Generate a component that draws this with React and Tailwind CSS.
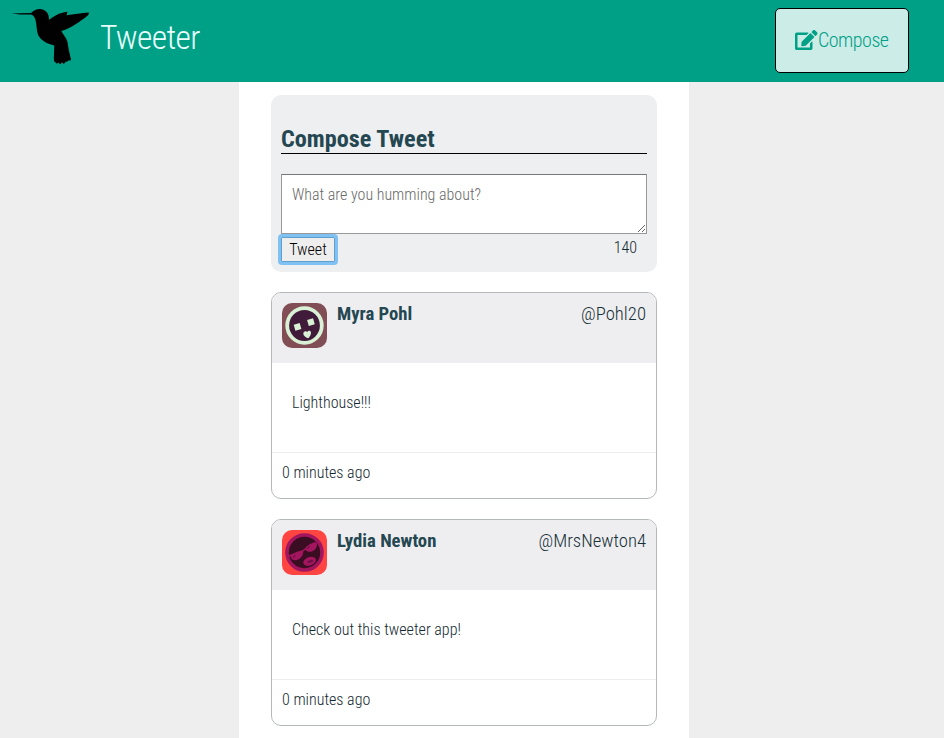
import { FaEdit } from "react-icons/fa";

function Bird() {
  return (
    <svg className="h-[82px] w-[100px] shrink-0" viewBox="0 0 100 82" fill="#000">
      <path d="M11.5 13.6 L20 13.2 L31 13 C33 10.8 36 9.1 40 9 C45 9.2 48.3 12.5 48.8 17 L49 19.8 C53 17 59 12.5 67.5 11.8 L66.5 15.2 C73 14.6 82 12.9 88.5 12.5 C90 14 87 16.3 84 18.5 C77 23.5 70 28.5 61.3 31 C63 34 66.5 38 67.5 42 C68 47 69.5 53 71 59.5 C70.5 61 69.5 60.5 68 60.5 C67.5 62 66.5 62 65.5 61.5 C65 64 63 64.5 62 62 C61.3 64.5 58.8 64.5 58.4 62.2 C57.5 64 55.5 63.8 55.5 62 C53.5 62.5 53.8 58 54 55 L54.3 45.5 C52 44.5 50 44.3 48 43.5 C42 40.8 38.5 37.5 37.3 32 C36.5 28 36.5 23.5 35.5 20 C34.8 17.5 33.5 15.2 31 14.6 L20 14.4 Z" />
    </svg>
  );
}

function MyraAvatar() {
  return (
    <svg className="size-[45px] shrink-0 rounded-[10px]" viewBox="0 0 45 45">
      <rect width="45" height="45" fill="#824e55" />
      <circle cx="22.5" cy="22.5" r="17.3" fill="#411b3a" stroke="#d9f2d5" strokeWidth="3.8" />
      <g fill="#d9f2d5">
        <rect x="12.4" y="20.7" width="6.2" height="6.2" transform="rotate(-16 15.5 23.7)" />
        <rect x="25.8" y="16" width="6.2" height="6.2" transform="rotate(-16 28.8 19)" />
        <path d="M21.5 29.5 C23 27.7 24.6 28.3 25.3 29.1 C26.1 27.2 28.7 27.2 29 29.4 C29.2 31.6 27.8 33.5 26.3 35.2 C24 34.5 20.6 32.7 21.5 29.5 Z" />
      </g>
    </svg>
  );
}

function LydiaAvatar() {
  return (
    <svg className="size-[45px] shrink-0 rounded-[10px]" viewBox="0 0 45 45">
      <rect width="45" height="45" fill="#ff4542" />
      <circle cx="22.5" cy="22.5" r="17.5" fill="#3a0d22" stroke="#a3155f" strokeWidth="3.6" />
      <g fill="#a3155f">
        <path d="M6 25.5 L10 24 C13 22.5 17 20.8 20.3 20.2 L22.6 18.7 C25 15.5 29 12.8 33.5 12 L35 13.5 C35.5 18.5 31.5 22 27 21.8 C25 21.6 24 20.8 23.4 19.8 L21.4 21.3 C21.5 26.5 17 30.6 12.5 30.2 C10 29.8 9 28.6 8.7 26.6 L6.5 26.8 Z" />
        <ellipse cx="27.6" cy="31.3" rx="6.6" ry="4.2" transform="rotate(-20 27.6 31.3)" />
      </g>
      <ellipse cx="28.3" cy="31.4" rx="2.9" ry="1.3" fill="#6d1041" transform="rotate(-20 28.3 31.4)" />
      <path d="M11.3 27.8 L13.3 24.8 M25.3 19.2 L27.5 16" stroke="#5a0f38" strokeWidth="1" />
    </svg>
  );
}

function Tweet({ avatar, name, handle, text }) {
  return (
    <article className="mt-5 h-[207px] overflow-hidden rounded-[10px] border border-[#b5b8bb] bg-white">
      <header className="flex h-[70px] bg-[#eeeef0] p-[10px]">
        {avatar}
        <h3 className="ml-[10px] text-[18.72px] leading-[22px] font-bold">{name}</h3>
        <span className="ml-auto text-[18.72px] leading-[22px] text-[#183038]">{handle}</span>
      </header>
      <p className="h-[89px] px-5 pt-[30px] leading-[19px] text-[#122830]">{text}</p>
      <footer className="border-t border-[#eeeeee] px-[10px] pt-[10px] leading-[19px] text-[#122830]">0 minutes ago</footer>
    </article>
  );
}

export default function App() {
  return (
    <div className="h-[738px] overflow-hidden bg-[#eeeeee] font-['Roboto_Condensed',Roboto,sans-serif] text-[16px] font-light text-[#244751] [font-stretch:75%]">
      <nav className="flex h-[82px] bg-[#00a087]">
        <Bird />
        <span className="pt-[18px] text-[33.5px] leading-[40px] tracking-[-0.65px] text-[#e8fffb]">Tweeter</span>
        <button className="mt-2 mr-[35px] ml-auto flex h-[65px] w-[134px] items-center justify-center rounded-[5px] border border-black bg-[#ccece7] pb-px text-[20px] tracking-[-0.5px] text-[#00a087]">
          <FaEdit className="h-5 w-[22.5px]" />
          Compose
        </button>
      </nav>
      <main className="ml-[239px] h-[656px] w-[450px] bg-white px-8 pt-[13px]">
        <section className="h-[177px] rounded-[10px] bg-[#eeeff1] px-[10px] pt-[29px]">
          <h2 className="h-[30px] border-b border-black text-[24.2px] leading-[30px] font-bold">Compose Tweet</h2>
          <textarea
            className="mt-5 block h-[60px] w-full resize border border-[#999] border-t-[#777] bg-white p-[10px] leading-[19px] placeholder:text-[#696969]"
            placeholder="What are you humming about?"
          />
          <div className="flex justify-between pt-[3px]">
            <button className="h-[25px] w-[54px] rounded-[1px] border border-[#5f9fce] bg-[#eeeeee] leading-[22px] text-black outline-[3px] outline-[#80c1f3] outline-solid">Tweet</button>
            <span className="pr-[10px] leading-[21px] text-[#122830]">140</span>
          </div>
        </section>
        <Tweet avatar={<MyraAvatar />} name="Myra Pohl" handle="@Pohl20" text="Lighthouse!!!" />
        <Tweet avatar={<LydiaAvatar />} name="Lydia Newton" handle="@MrsNewton4" text="Check out this tweeter app!" />
      </main>
    </div>
  );
}
